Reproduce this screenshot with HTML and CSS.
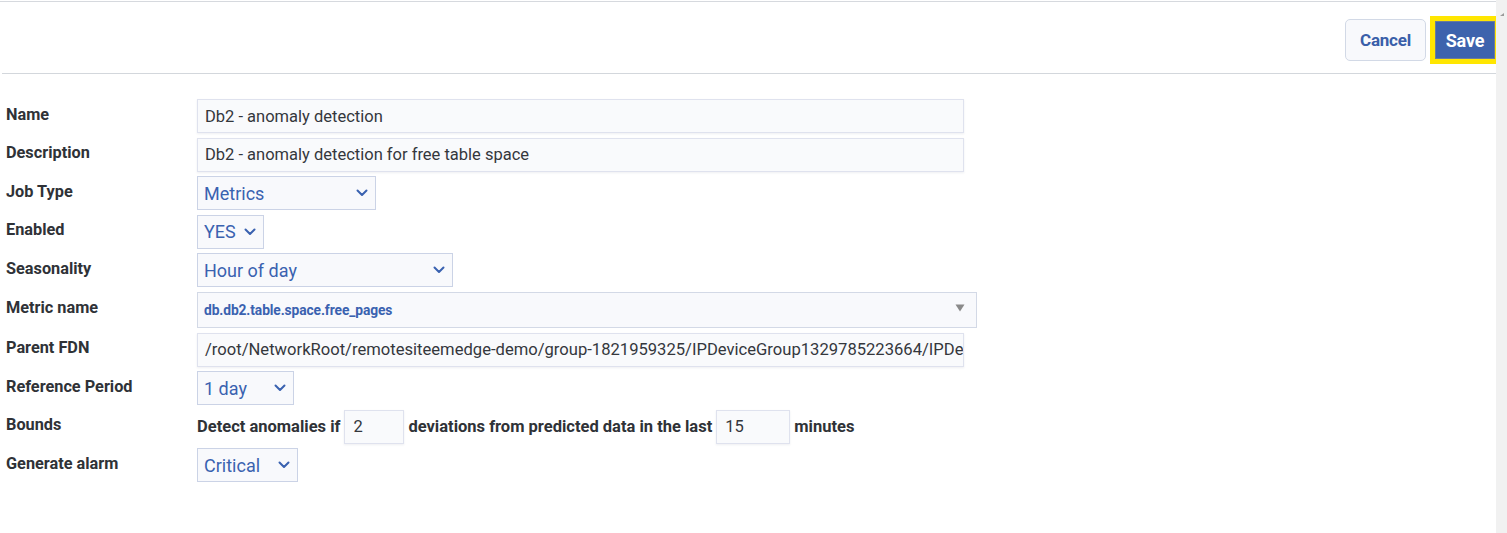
FILE: index.html
```html
<!DOCTYPE html>
<html>
<head>
<meta charset="utf-8">
<link rel="stylesheet" href="styles.css">
</head>
<body>
<div class="page">
  <div class="main">
    <div class="topline"></div>
    <div class="header">
      <button class="btn btn-cancel">Cancel</button>
      <button class="btn btn-save">Save</button>
    </div>
    <div class="form">
      <div class="label">Name</div>
      <div class="field"><div class="text-input w-wide">Db2 - anomaly detection</div></div>

      <div class="label">Description</div>
      <div class="field"><div class="text-input w-wide">Db2 - anomaly detection for free table space</div></div>

      <div class="label">Job Type</div>
      <div class="field"><div class="select w-job"><span>Metrics</span><svg class="chev" viewBox="0 0 12 8"><polyline points="1.5,1.5 6,6 10.5,1.5"/></svg></div></div>

      <div class="label">Enabled</div>
      <div class="field"><div class="select w-enabled"><span>YES</span><svg class="chev" viewBox="0 0 12 8"><polyline points="1.5,1.5 6,6 10.5,1.5"/></svg></div></div>

      <div class="label">Seasonality</div>
      <div class="field"><div class="select w-season"><span>Hour of day</span><svg class="chev" viewBox="0 0 12 8"><polyline points="1.5,1.5 6,6 10.5,1.5"/></svg></div></div>

      <div class="label">Metric name</div>
      <div class="field"><div class="combo"><span>db.db2.table.space.free_pages</span><svg class="tri" viewBox="0 0 10 8"><polygon points="0.5,0.5 9.5,0.5 5,7.5"/></svg></div></div>

      <div class="label">Parent FDN</div>
      <div class="field"><div class="text-input w-wide clip"><span class="cliptext">/root/NetworkRoot/remotesiteemedge-demo/group-1821959325/IPDeviceGroup1329785223664/IPDe</span></div></div>

      <div class="label">Reference Period</div>
      <div class="field"><div class="select w-period"><span>1 day</span><svg class="chev" viewBox="0 0 12 8"><polyline points="1.5,1.5 6,6 10.5,1.5"/></svg></div></div>

      <div class="label">Bounds</div>
      <div class="field bounds">
        <span class="btext">Detect anomalies if</span>
        <div class="text-input num w-num1">2</div>
        <span class="btext">deviations from predicted data in the last</span>
        <div class="text-input num w-num2">15</div>
        <span class="btext">minutes</span>
      </div>

      <div class="label">Generate alarm</div>
      <div class="field"><div class="select w-alarm"><span>Critical</span><svg class="chev" viewBox="0 0 12 8"><polyline points="1.5,1.5 6,6 10.5,1.5"/></svg></div></div>
    </div>
  </div>
  <div class="scrollbar">
    <svg class="sb-arrow" viewBox="0 0 4 3"><polygon points="0,3 4,3 4,0"/></svg>
  </div>
</div>
</body>
</html>
```

FILE: styles.css
```css
* { box-sizing: border-box; }
html, body {
  margin: 0;
  padding: 0;
  background: #ffffff;
  font-family: Roboto, "Liberation Sans", Arial, sans-serif;
}
.page {
  display: flex;
  width: 1507px;
  height: 533px;
  overflow: hidden;
}
.main {
  width: 1496px;
  flex: none;
}
.scrollbar {
  width: 11px;
  flex: none;
  background: #f1f1f1;
  position: relative;
}
.sb-arrow {
  position: absolute;
  left: 4px;
  top: 13px;
  width: 4px;
  height: 3px;
  fill: #9a9a9a;
}
.topline {
  margin-top: 1px;
  height: 1px;
  background: #d6d9de;
}
.header {
  height: 72px;
  margin-left: 2px;
  border-bottom: 1px solid #d3d7dc;
  display: flex;
  justify-content: flex-end;
  align-items: center;
  padding-top: 5px;
  padding-right: 2px;
  gap: 10px;
}
.btn {
  font-family: Roboto, "Liberation Sans", Arial, sans-serif;
  font-weight: 700;
  font-size: 17px;
  cursor: pointer;
  padding: 0;
  letter-spacing: -0.2px;
}
.btn-cancel {
  width: 81px;
  height: 42px;
  background: #f8f9fc;
  border: 1px solid #d2d9e6;
  border-radius: 5px;
  color: #3a5fa9;
}
.btn-save {
  width: 58px;
  height: 36px;
  font-size: 18px;
  background: #3d63ad;
  color: #ffffff;
  border: none;
  border-radius: 0;
  box-shadow: 0 0 0 1px #6b7c99;
  outline: 5px solid #ffe600;
  outline-offset: 1px;
}
.form {
  display: grid;
  grid-template-columns: 191px 1fr;
  row-gap: 4.6px;
  padding-left: 6px;
  margin-top: 25px;
  align-items: center;
}
.label {
  font-weight: 700;
  font-size: 16.3px;
  color: #2f3237;
  margin-top: -4px;
}
.field {
  display: flex;
  align-items: center;
}
.text-input {
  height: 34px;
  background: #f9fafc;
  border: 1px solid #dfe2ee;
  box-shadow: 0 1px 2px rgba(40, 50, 90, 0.08);
  font-size: 16.5px;
  color: #34373c;
  padding: 0 7px;
  display: flex;
  align-items: center;
  white-space: nowrap;
  overflow: hidden;
}
.w-wide { width: 767px; }
.cliptext {
  font-size: 16.6px;
}
.select {
  height: 34px;
  background: #f8f9fc;
  border: 1px solid #cbd3e6;
  color: #3a62b0;
  font-size: 18px;
  display: flex;
  align-items: center;
  justify-content: space-between;
  padding: 0 7px 0 6px;
}
.chev {
  width: 12px;
  height: 8px;
  fill: none;
  stroke: #3a62b0;
  stroke-width: 2;
  stroke-linecap: round;
  stroke-linejoin: round;
}
.w-job { width: 179px; }
.w-enabled { width: 67px; }
.w-season { width: 256px; }
.w-period { width: 97px; }
.w-alarm { width: 101px; }
.combo {
  width: 780px;
  height: 36px;
  background: #f8f9fc;
  border: 1px solid #d3d9e6;
  display: flex;
  align-items: center;
  justify-content: space-between;
  padding: 0 11px 0 6px;
  color: #3a62b0;
  font-size: 13.8px;
  font-weight: 700;
  letter-spacing: -0.1px;
}
.tri {
  width: 10px;
  height: 8px;
  fill: #8a8a8a;
  margin-top: -4px;
}
.bounds {
  gap: 4px;
}
.btext {
  font-weight: 700;
  font-size: 16.5px;
  color: #2f3237;
  white-space: nowrap;
}
.num {
  padding-left: 8px;
}
.w-num1 { width: 60px; }
.w-num2 { width: 74px; }
```
